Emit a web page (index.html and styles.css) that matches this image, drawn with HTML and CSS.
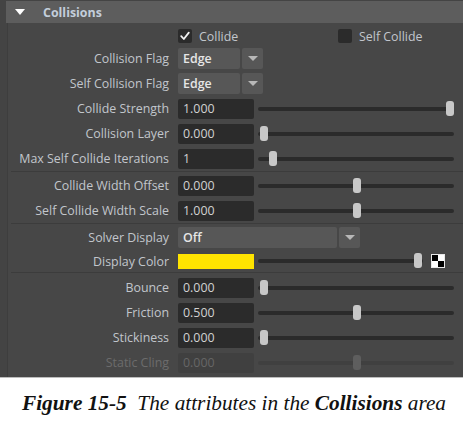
FILE: index.html
```html
<!DOCTYPE html>
<html>
<head>
<meta charset="utf-8">
<link rel="stylesheet" href="styles.css">
</head>
<body>
<div class="panel">
  <div class="header"><span class="tri"></span><span class="title">Collisions</span></div>
  <div class="content">
    <div class="row check-row">
      <div class="label"></div>
      <div class="check first"><span class="box"><svg width="14" height="14" viewBox="0 0 14 14"><polyline points="3.2,7.2 5.8,10 10.8,3.6" fill="none" stroke="#f2f2f2" stroke-width="1.8" stroke-linecap="round" stroke-linejoin="round"/></svg></span><span class="ctext">Collide</span></div>
      <div class="check"><span class="box"></span><span class="ctext">Self Collide</span></div>
    </div>

    <div class="row"><div class="label">Collision Flag</div><div class="select small">Edge</div><div class="drop"><span class="dtri"></span></div></div>
    <div class="row"><div class="label">Self Collision Flag</div><div class="select small">Edge</div><div class="drop"><span class="dtri"></span></div></div>
    <div class="row"><div class="label">Collide Strength</div><div class="field">1.000</div><div class="slider"><span class="thumb" style="left:188px"></span></div></div>
    <div class="row"><div class="label">Collision Layer</div><div class="field">0.000</div><div class="slider"><span class="thumb" style="left:2px"></span></div></div>
    <div class="row"><div class="label">Max Self Collide Iterations</div><div class="field">1</div><div class="slider"><span class="thumb" style="left:11px"></span></div></div>
    <div class="sep"></div>
    <div class="row"><div class="label">Collide Width Offset</div><div class="field">0.000</div><div class="slider"><span class="thumb" style="left:95px"></span></div></div>
    <div class="row"><div class="label">Self Collide Width Scale</div><div class="field">1.000</div><div class="slider"><span class="thumb" style="left:95px"></span></div></div>
    <div class="sep"></div>
    <div class="row"><div class="label">Solver Display</div><div class="select wide">Off</div><div class="drop"><span class="dtri"></span></div></div>
    <div class="row color-row"><div class="label">Display Color</div><div class="swatch"></div><div class="slider short"><span class="thumb" style="left:156px"></span></div><div class="checker"><span></span><span></span><span></span><span></span></div></div>
    <div class="sep last"></div>
    <div class="row"><div class="label">Bounce</div><div class="field">0.000</div><div class="slider"><span class="thumb" style="left:2px"></span></div></div>
    <div class="row"><div class="label">Friction</div><div class="field">0.500</div><div class="slider"><span class="thumb" style="left:95px"></span></div></div>
    <div class="row"><div class="label">Stickiness</div><div class="field">0.000</div><div class="slider"><span class="thumb" style="left:2px"></span></div></div>
    <div class="row disabled"><div class="label">Static Cling</div><div class="field">0.000</div><div class="slider"><span class="thumb" style="left:95px"></span></div></div>
  </div>
</div>
<p class="caption"><b>Figure 15-5</b>&nbsp; The attributes in the <b>Collisions</b> area</p>
</body>
</html>
```

FILE: styles.css
```css
* { box-sizing: border-box; }
html, body { margin: 0; padding: 0; background: #fff; }
body {
  width: 463px;
  height: 426px;
  overflow: hidden;
  font-family: "Open Sans", "Liberation Sans", sans-serif;
  font-size: 12.4px;
}
.panel {
  background: #444444;
  height: 378px;
  padding-top: 1px;
  border-bottom: 1px solid #bdbdbd;
}
.header {
  margin-left: 6px;
  height: 22px;
  background: #5d5d5d;
  display: flex;
  align-items: center;
}
.tri {
  width: 0;
  height: 0;
  border-left: 5px solid transparent;
  border-right: 5px solid transparent;
  border-top: 6px solid #ffffff;
  margin-left: 9px;
}
.title {
  margin-left: 18px;
  color: #c3cedb;
  font-weight: bold;
  font-size: 12.4px;
}
.content {
  margin-left: 7px;
  border-left: 1px solid #3e3e3e;
  background: #474747;
  height: 354px;
  padding-top: 3px;
}
.row {
  display: flex;
  align-items: center;
  height: 25px;
}
.check-row { height: 20px; }
.label {
  width: 161px;
  margin-right: 9px;
  text-align: right;
  color: #c2c6cc;
  white-space: nowrap;
}
.check { display: flex; align-items: center; }
.check.first { width: 160px; }
.box {
  width: 14px;
  height: 14px;
  background: #2b2b2b;
  border-radius: 2px;
  display: block;
}
.box svg { display: block; }
.ctext { margin-left: 7px; color: #c2c6cc; }
.select {
  height: 21px;
  background: #575757;
  border-radius: 2px;
  color: #e6e6e6;
  font-weight: 600;
  padding-left: 5px;
  line-height: 21px;
}
.select.small { width: 62px; }
.select.wide { width: 159px; }
.drop {
  width: 21px;
  height: 21px;
  margin-left: 2px;
  background: #575757;
  border-radius: 2px;
  display: flex;
  align-items: center;
  justify-content: center;
}
.dtri {
  width: 0;
  height: 0;
  border-left: 5px solid transparent;
  border-right: 5px solid transparent;
  border-top: 5px solid #b8b8b8;
}
.field {
  width: 76px;
  height: 20px;
  background: #2b2b2b;
  border-radius: 2px;
  color: #d2d2d2;
  padding-left: 5px;
  line-height: 20px;
}
.slider {
  position: relative;
  width: 196px;
  height: 4px;
  margin-left: 4px;
  background: #2b2b2b;
  border-radius: 2px;
}
.slider.short { width: 165px; }
.thumb {
  position: absolute;
  top: -6px;
  width: 8px;
  height: 15px;
  background: #c8c8c8;
  border-radius: 3px;
}
.color-row { height: 22px; }
.swatch {
  width: 76px;
  height: 15px;
  background: #ffe400;
}
.checker {
  margin-left: 8px;
  width: 14px;
  height: 14px;
  border: 1px solid #e8e8e8;
  display: grid;
  grid-template-columns: 1fr 1fr;
  grid-template-rows: 1fr 1fr;
}
.checker span:nth-child(1), .checker span:nth-child(4) { background: #000; }
.checker span:nth-child(2), .checker span:nth-child(3) { background: #fff; }
.sep {
  height: 1px;
  background: #3c3c3c;
  margin: 0 0 1px 3px;
}
.sep.last { margin-bottom: 2px; }
.disabled .label { color: #6c6c6c; }
.disabled .field { background: #404040; color: #666; }
.disabled .slider { background: #404040; }
.disabled .thumb { background: #5e5e5e; }
.caption {
  margin: 13px 0 0 22px;
  font-family: "Liberation Serif", serif;
  font-style: italic;
  font-size: 21.3px;
  color: #111;
  white-space: nowrap;
}
```
